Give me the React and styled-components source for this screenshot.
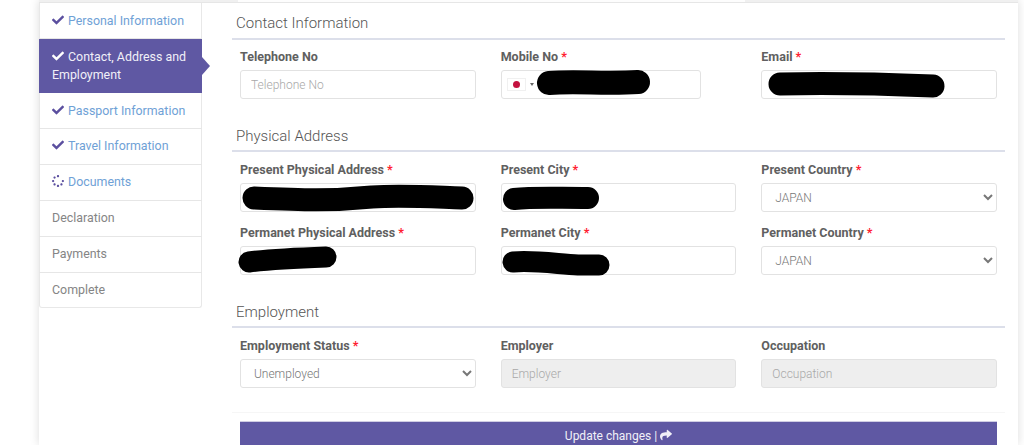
import React from 'react';
import styled, { createGlobalStyle } from 'styled-components';
import { FaCheck, FaSpinner, FaShare } from 'react-icons/fa';

const GlobalStyle = createGlobalStyle`
    html, body {
        margin: 0;
        height: 445px;
        overflow: hidden;
        background: #fff;
        font-family: Roboto, "Liberation Sans", sans-serif;
    }
`;

const Page = styled.div`
    box-sizing: border-box;
    width: 979px;
    height: 445px;
    margin-left: 39px;
    background: #fff;
    box-shadow: 0 0 9px rgba(0, 0, 0, 0.14);
    overflow: hidden;
`;

const TopStrip = styled.div`
    display: flex;
    height: 2px;
    border-bottom: 1px solid #e6e6e6;
`;

const StripPart = styled.div`
    width: ${p => p.$width};
    flex: ${p => (p.$width ? 'none' : 1)};
    background: ${p => p.$color};
`;

const Body = styled.div`
    display: flex;
    align-items: flex-start;
`;

const Sidebar = styled.ul`
    box-sizing: border-box;
    flex: none;
    width: 163px;
    margin: 0;
    padding: 0;
    list-style: none;
    border: 1px solid #e8e8e8;
    border-top: 0;
    border-radius: 0 0 3px 3px;
`;

const Step = styled.li`
    position: relative;
    box-sizing: border-box;
    margin: 0 -1px;
    padding: 8px 8px 0 13px;
    height: ${p => (p.$active ? '54px' : '36px')};
    font-size: 12.4px;
    line-height: 18px;
    color: ${p => (p.$active ? '#f1f0f8' : p.$done ? '#6fa1d6' : '#858585')};
    background: ${p => (p.$active ? '#5f58a3' : 'transparent')};
    border-bottom: ${p => (p.$active ? '0' : '1px solid #e6e6e6')};

    &:nth-child(-n + 3) {
        padding-top: 9px;
    }

    &:last-child {
        height: 34px;
        border-bottom: 0;
    }

    svg {
        color: ${p => (p.$active ? '#fff' : '#5b4f9f')};
        font-size: 12px;
        margin-right: 4px;
        vertical-align: -1px;
    }
`;

const StepArrow = styled.span`
    position: absolute;
    top: 18px;
    right: -8px;
    border-left: 8px solid #5f58a3;
    border-top: 9px solid transparent;
    border-bottom: 9px solid transparent;
`;

const Main = styled.main`
    flex: 1;
    box-sizing: border-box;
    padding: 5px 13px 0 30px;
`;

const SectionTitle = styled.h3`
    box-sizing: border-box;
    margin: ${p => (p.$first ? '0' : '22px 0 0')};
    padding: 0 4px;
    height: ${p => (p.$first ? '32px' : '31px')};
    font-size: 15px;
    font-weight: 300;
    line-height: 31px;
    color: #555;
    border-bottom: 2px solid #dcdfea;
`;

const FieldGrid = styled.div`
    display: grid;
    grid-template-columns: repeat(3, 1fr);
    column-gap: 25px;
    row-gap: 11px;
    padding: ${p => (p.$tight ? '7px' : '8px')} 8px 0;
`;

const Field = styled.div`
    min-width: 0;
`;

const Label = styled.label`
    display: block;
    margin-bottom: 4px;
    font-size: 12.5px;
    font-weight: 700;
    line-height: 19px;
    color: #606060;
`;

const Required = styled.span`
    color: #ff2030;
`;

const InputWrap = styled.div`
    position: relative;
    width: ${p => p.$width || '100%'};
`;

const Input = styled.input`
    box-sizing: border-box;
    display: block;
    width: 100%;
    height: 29px;
    padding: 0 10px;
    font-family: inherit;
    font-size: 12px;
    font-weight: 300;
    color: #777;
    background: ${p => (p.disabled ? '#eeeeee' : '#fff')};
    border: 1px solid #e2e2e2;
    border-radius: 3px;
    outline: none;

    &::placeholder {
        color: #a8a8a8;
        opacity: 1;
    }
`;

const Select = styled.select`
    box-sizing: border-box;
    display: block;
    width: 100%;
    height: 29px;
    padding: 0 6px;
    font-family: inherit;
    font-size: 12px;
    font-weight: 300;
    color: #777;
    background: #fff;
    border: 1px solid #e2e2e2;
    border-radius: 3px;
    outline: none;
`;

const Flag = styled.span`
    position: absolute;
    top: 8px;
    left: 6px;
    display: flex;
    align-items: center;
    justify-content: center;
    box-sizing: border-box;
    width: 19px;
    height: 13px;
    background: #fff;
    border: 1px solid #f0f0f0;

    &::after {
        content: "";
        width: 7px;
        height: 7px;
        border-radius: 50%;
        background: #c4123f;
    }
`;

const FlagCaret = styled.span`
    position: absolute;
    top: 13px;
    left: 29px;
    border-top: 3px solid #666;
    border-left: 2.5px solid transparent;
    border-right: 2.5px solid transparent;
`;

const Scribble = styled.svg`
    position: absolute;
    top: -8px;
    left: -8px;
    width: 260px;
    height: 45px;
    overflow: visible;
    pointer-events: none;
`;

const ScribbleLine = styled.path`
    fill: none;
    stroke: #000;
    stroke-width: ${p => p.$thick || 22}px;
    stroke-linecap: round;
    stroke-linejoin: round;
`;

const Divider = styled.div`
    margin: 24px 0 8px;
    border-top: 1px solid #f6f6f6;
`;

const Actions = styled.div`
    padding: 0 8px;
`;

const SubmitButton = styled.button`
    display: block;
    width: 100%;
    height: 30px;
    padding: 0 0 1px;
    font-family: inherit;
    font-size: 12px;
    color: #f1f0f8;
    background: #5f58a3;
    border: 0;
    border-top: 1px solid #cfcde3;

    svg {
        vertical-align: -1px;
    }
`;

const steps = [
    { name: 'Personal Information', state: 'done' },
    { name: 'Contact, Address and Employment', state: 'active' },
    { name: 'Passport Information', state: 'done' },
    { name: 'Travel Information', state: 'done' },
    { name: 'Documents', state: 'progress' },
    { name: 'Declaration' },
    { name: 'Payments' },
    { name: 'Complete' },
];

// scribbles drawn over the private values, coordinates are from the input's corner + 8px
const Redacted = ({ d, thick }) => (
    <Scribble viewBox="0 0 260 45">
        <ScribbleLine d={d} $thick={thick} />
    </Scribble>
);

const FieldLabel = ({ children, required }) => (
    <Label>
        {children}
        {required && <Required> *</Required>}
    </Label>
);

const App = () => (
    <Page>
        <GlobalStyle />
        <TopStrip>
            <StripPart $width="199px" $color="#f0f0f0" />
            <StripPart $width="507px" $color="#fdfdfd" />
            <StripPart $color="#f0f0f0" />
        </TopStrip>
        <Body>
            <Sidebar>
                {steps.map(step => (
                    <Step key={step.name} $active={step.state === 'active'} $done={step.state === 'done' || step.state === 'progress'}>
                        {(step.state === 'done' || step.state === 'active') && <FaCheck />}
                        {step.state === 'progress' && <FaSpinner />}
                        {step.name}
                        {step.state === 'active' && <StepArrow />}
                    </Step>
                ))}
            </Sidebar>
            <Main>
                <SectionTitle $first>Contact Information</SectionTitle>
                <FieldGrid $tight>
                    <Field>
                        <FieldLabel>Telephone No</FieldLabel>
                        <Input placeholder="Telephone No" />
                    </Field>
                    <Field>
                        <FieldLabel required>Mobile No</FieldLabel>
                        <InputWrap $width="200px">
                            <Input />
                            <Flag />
                            <FlagCaret />
                            <Redacted d="M56 21 C80 19 115 22 145 20" thick={24} />
                        </InputWrap>
                    </Field>
                    <Field>
                        <FieldLabel required>Email</FieldLabel>
                        <InputWrap>
                            <Input />
                            <Redacted d="M27 22 C70 21 130 22 180 24" thick={23} />
                        </InputWrap>
                    </Field>
                </FieldGrid>

                <SectionTitle>Physical Address</SectionTitle>
                <FieldGrid>
                    <Field>
                        <FieldLabel required>Present Physical Address</FieldLabel>
                        <InputWrap>
                            <Input />
                            <Redacted d="M22 23 C70 25 100 26 140 22 C170 20 200 22 230 23" thick={23} />
                        </InputWrap>
                    </Field>
                    <Field>
                        <FieldLabel required>Present City</FieldLabel>
                        <InputWrap>
                            <Input />
                            <Redacted d="M21 24 C40 22 60 23 95 23" thick={22} />
                        </InputWrap>
                    </Field>
                    <Field>
                        <FieldLabel required>Present Country</FieldLabel>
                        <Select defaultValue="JAPAN">
                            <option>&nbsp;JAPAN</option>
                        </Select>
                    </Field>
                    <Field>
                        <FieldLabel required>Permanet Physical Address</FieldLabel>
                        <InputWrap>
                            <Input />
                            <Redacted d="M17 24 C40 21 65 20 94 19" thick={21} />
                        </InputWrap>
                    </Field>
                    <Field>
                        <FieldLabel required>Permanet City</FieldLabel>
                        <InputWrap>
                            <Input />
                            <Redacted d="M20 24 C40 22 65 26 85 27 C92 27 100 27 106 27" thick={21} />
                        </InputWrap>
                    </Field>
                    <Field>
                        <FieldLabel required>Permanet Country</FieldLabel>
                        <Select defaultValue="JAPAN">
                            <option>&nbsp;JAPAN</option>
                        </Select>
                    </Field>
                </FieldGrid>

                <SectionTitle>Employment</SectionTitle>
                <FieldGrid>
                    <Field>
                        <FieldLabel required>Employment Status</FieldLabel>
                        <Select defaultValue="Unemployed">
                            <option>&nbsp;Unemployed</option>
                        </Select>
                    </Field>
                    <Field>
                        <FieldLabel>Employer</FieldLabel>
                        <Input disabled placeholder="Employer" />
                    </Field>
                    <Field>
                        <FieldLabel>Occupation</FieldLabel>
                        <Input disabled placeholder="Occupation" />
                    </Field>
                </FieldGrid>

                <Divider />
                <Actions>
                    <SubmitButton>Update changes | <FaShare /></SubmitButton>
                </Actions>
            </Main>
        </Body>
    </Page>
);

export default App;
